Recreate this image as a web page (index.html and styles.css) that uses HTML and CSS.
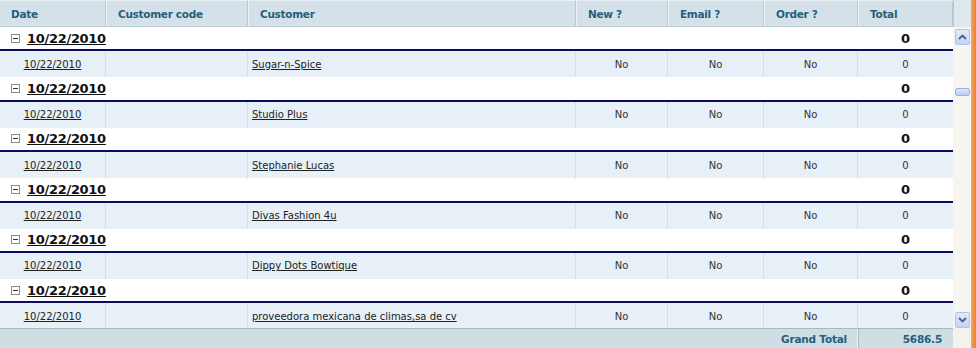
FILE: index.html
```html
<!DOCTYPE html>
<html>
<head>
<meta charset="utf-8">
<link rel="stylesheet" href="styles.css">
</head>
<body>
<div class="frame">
  <div class="gridwrap">
    <div class="row head">
      <div class="hc">Date</div>
      <div class="hc">Customer code</div>
      <div class="hc">Customer</div>
      <div class="hc">New ?</div>
      <div class="hc">Email ?</div>
      <div class="hc">Order ?</div>
      <div class="hc">Total</div>
    </div>
    <div class="body">
      <div class="row group"><div class="gtitle"><span class="tog"></span><a>10/22/2010</a></div><div class="gtot">0</div></div>
      <div class="row data"><div class="c ctr"><a>10/22/2010</a></div><div class="c"></div><div class="c left"><a>Sugar-n-Spice</a></div><div class="c ctr">No</div><div class="c ctr">No</div><div class="c ctr">No</div><div class="c ctr">0</div></div>
      <div class="row group"><div class="gtitle"><span class="tog"></span><a>10/22/2010</a></div><div class="gtot">0</div></div>
      <div class="row data"><div class="c ctr"><a>10/22/2010</a></div><div class="c"></div><div class="c left"><a>Studio Plus</a></div><div class="c ctr">No</div><div class="c ctr">No</div><div class="c ctr">No</div><div class="c ctr">0</div></div>
      <div class="row group"><div class="gtitle"><span class="tog"></span><a>10/22/2010</a></div><div class="gtot">0</div></div>
      <div class="row data"><div class="c ctr"><a>10/22/2010</a></div><div class="c"></div><div class="c left"><a>Stephanie Lucas</a></div><div class="c ctr">No</div><div class="c ctr">No</div><div class="c ctr">No</div><div class="c ctr">0</div></div>
      <div class="row group"><div class="gtitle"><span class="tog"></span><a>10/22/2010</a></div><div class="gtot">0</div></div>
      <div class="row data"><div class="c ctr"><a>10/22/2010</a></div><div class="c"></div><div class="c left"><a>Divas Fashion 4u</a></div><div class="c ctr">No</div><div class="c ctr">No</div><div class="c ctr">No</div><div class="c ctr">0</div></div>
      <div class="row group"><div class="gtitle"><span class="tog"></span><a>10/22/2010</a></div><div class="gtot">0</div></div>
      <div class="row data"><div class="c ctr"><a>10/22/2010</a></div><div class="c"></div><div class="c left"><a>Dippy Dots Bowtique</a></div><div class="c ctr">No</div><div class="c ctr">No</div><div class="c ctr">No</div><div class="c ctr">0</div></div>
      <div class="row group"><div class="gtitle"><span class="tog"></span><a>10/22/2010</a></div><div class="gtot">0</div></div>
      <div class="row data"><div class="c ctr"><a>10/22/2010</a></div><div class="c"></div><div class="c left"><a>proveedora mexicana de climas,sa de cv</a></div><div class="c ctr">No</div><div class="c ctr">No</div><div class="c ctr">No</div><div class="c ctr">0</div></div>
    </div>
    <div class="row foot">
      <div class="fc gt">Grand Total</div>
      <div class="fc ft">5686.5</div>
    </div>
  </div>
  <div class="sbar">
    <div class="sb-head"></div>
    <div class="sb-track">
      <div class="sb-btn"><svg width="9" height="6" viewBox="0 0 9 6"><path d="M1 5 L4.5 1.5 L8 5" fill="none" stroke="#4d6185" stroke-width="1.8"/></svg></div>
      <div class="sb-gap1"></div>
      <div class="sb-thumb"></div>
      <div class="sb-gap2"></div>
      <div class="sb-btn"><svg width="9" height="6" viewBox="0 0 9 6"><path d="M1 1 L4.5 4.5 L8 1" fill="none" stroke="#4d6185" stroke-width="1.8"/></svg></div>
    </div>
    <div class="sb-foot"></div>
  </div>
  <div class="orange"></div>
</div>
</body>
</html>
```

FILE: styles.css
```css
html, body {
  margin: 0;
  padding: 0;
  background: #ffffff;
}
.frame {
  display: flex;
  width: 976px;
  height: 348px;
  font-family: "DejaVu Sans", "Liberation Sans", sans-serif;
  font-size: 11px;
  color: #222;
}
.gridwrap {
  width: 953px;
  display: flex;
  flex-direction: column;
}
.row {
  display: grid;
  grid-template-columns: 106px 142px 328px 92px 96px 94px 95px;
}
.head {
  height: 27px;
  flex: none;
  background: #d4e1e8;
  border-top: 1px solid #e8eff3;
  box-sizing: border-box;
  border-bottom: 1px solid #c3d2da;
}
.hc {
  display: flex;
  align-items: center;
  padding-left: 11px;
  font-weight: bold;
  color: #245f7d;
  font-size: 10.5px;
  letter-spacing: -0.3px;
  border-left: 1px solid #eef4f7;
  border-right: 1px solid #b7c9d3;
}
.hc:first-child { border-left: none; }
.body {
  flex: 1;
  overflow: hidden;
  display: flex;
  flex-direction: column;
}
.group {
  flex: none;
  height: 24.4px;
  background: #fff;
  border-bottom: 2px solid #0c0c62;
  box-sizing: border-box;
}
.gtitle {
  grid-column: 1 / 7;
  display: flex;
  align-items: center;
  padding-left: 11px;
  font-weight: bold;
  font-size: 13px;
}
.gtitle a {
  color: #111;
  text-decoration: underline;
  margin-left: 7px;
  letter-spacing: -0.3px;
}
.tog {
  width: 9px;
  height: 9px;
  border: 1px solid #8a8a8a;
  box-sizing: border-box;
  position: relative;
  display: inline-block;
  background: #fff;
}
.tog::after {
  content: "";
  position: absolute;
  left: 1px;
  right: 1px;
  top: 3px;
  height: 1px;
  background: #333;
}
.gtot {
  display: flex;
  align-items: center;
  justify-content: center;
  font-weight: bold;
  font-size: 13px;
  color: #111;
}
.data {
  flex: none;
  height: 26px;
  background: #e7f0f7;
}
.c {
  display: flex;
  align-items: center;
  border-right: 1px solid #d2dee6;
  font-size: 10px;
  color: #333;
}
.c:last-child { border-right: none; }
.c a { color: #222; text-decoration: underline; }
.ctr { justify-content: center; }
.left { padding-left: 4px; }
.foot {
  flex: none;
  height: 20px;
  background: #cfdde5;
  border-top: 1px solid #a9b7be;
  box-sizing: border-box;
}
.fc {
  display: flex;
  align-items: center;
  justify-content: flex-end;
  font-weight: bold;
  color: #245f7d;
  font-size: 10.5px;
  letter-spacing: -0.2px;
}
.gt {
  grid-column: 1 / 7;
  padding-right: 10px;
  border-right: 1px solid #eef4f7;
}
.ft {
  padding-right: 11px;
  border-left: 1px solid #a9b7be;
}
.sbar {
  width: 18px;
  display: flex;
  flex-direction: column;
  background: #f6f5f0;
}
.sb-head {
  height: 27px;
  background: #dfe8ed;
  border-left: 1px solid #b7c9d3;
  box-sizing: border-box;
}
.sb-track {
  flex: 1;
  display: flex;
  flex-direction: column;
  padding: 2px 1px 0 2px;
}
.sb-btn {
  height: 16px;
  border: 1px solid #b3c3e6;
  border-radius: 2px;
  background: linear-gradient(#e2eafc, #c3d3f7);
  box-sizing: border-box;
  display: flex;
  align-items: center;
  justify-content: center;
}
.sb-gap1 { height: 43px; }
.sb-thumb {
  height: 8px;
  border: 1px solid #9fb2e0;
  border-radius: 2px;
  background: linear-gradient(#dbe5fb, #bccdf4);
  box-sizing: border-box;
}
.sb-gap2 { flex: 1; }
.sb-foot {
  height: 20px;
  background: #f3f2ec;
}
.orange {
  width: 5px;
  background: linear-gradient(90deg, #f6a65c, #ee7f2a);
}
```
